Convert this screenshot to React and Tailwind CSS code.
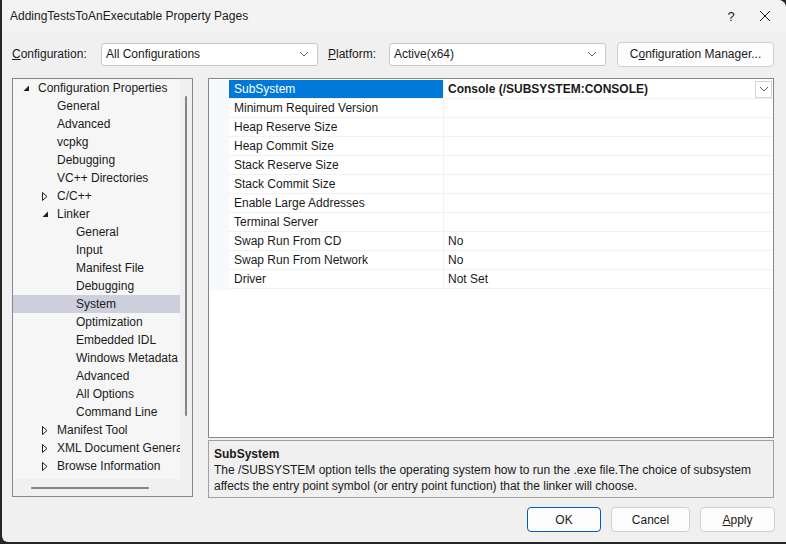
import React from "react";

const treeItems = [
  { label: "Configuration Properties", level: 0, arrow: "open" },
  { label: "General", level: 1 },
  { label: "Advanced", level: 1 },
  { label: "vcpkg", level: 1 },
  { label: "Debugging", level: 1 },
  { label: "VC++ Directories", level: 1 },
  { label: "C/C++", level: 1, arrow: "closed" },
  { label: "Linker", level: 1, arrow: "open" },
  { label: "General", level: 2 },
  { label: "Input", level: 2 },
  { label: "Manifest File", level: 2 },
  { label: "Debugging", level: 2 },
  { label: "System", level: 2, selected: true },
  { label: "Optimization", level: 2 },
  { label: "Embedded IDL", level: 2 },
  { label: "Windows Metadata", level: 2 },
  { label: "Advanced", level: 2 },
  { label: "All Options", level: 2 },
  { label: "Command Line", level: 2 },
  { label: "Manifest Tool", level: 1, arrow: "closed" },
  { label: "XML Document Generator", level: 1, arrow: "closed" },
  { label: "Browse Information", level: 1, arrow: "closed" },
];

const props = [
  ["SubSystem", "Console (/SUBSYSTEM:CONSOLE)"],
  ["Minimum Required Version", ""],
  ["Heap Reserve Size", ""],
  ["Heap Commit Size", ""],
  ["Stack Reserve Size", ""],
  ["Stack Commit Size", ""],
  ["Enable Large Addresses", ""],
  ["Terminal Server", ""],
  ["Swap Run From CD", "No"],
  ["Swap Run From Network", "No"],
  ["Driver", "Not Set"],
];

const indent = ["pl-[10px]", "pl-[29px]", "pl-[48px]"];

function Chevron() {
  return (
    <svg width="10" height="6" viewBox="0 0 10 6" className="shrink-0">
      <path d="M1 1l4 4 4-4" fill="none" stroke="#606060" strokeWidth="1" />
    </svg>
  );
}

function Arrow({ kind }) {
  if (kind === "open") {
    return (
      <svg width="7" height="7" viewBox="0 0 7 7">
        <path d="M6 0.5V6H0.5z" fill="#1e1e1e" />
      </svg>
    );
  }
  if (kind === "closed") {
    return (
      <svg width="6" height="9" viewBox="0 0 6 9">
        <path d="M0.5 0.5L5 4.5 0.5 8.5z" fill="none" stroke="#1e1e1e" strokeWidth="1" />
      </svg>
    );
  }
  return null;
}

function Select({ value, width }) {
  return (
    <div className={`${width} h-[23px] bg-white border border-[#c8c8c8] rounded-[3px] flex items-center justify-between pl-[4px] pr-[8px]`}>
      <span>{value}</span>
      <Chevron />
    </div>
  );
}

function Button({ children, primary, width }) {
  return (
    <div
      className={`${width} h-[25px] rounded-[4px] bg-[#fdfdfd] flex items-center justify-center ${
        primary ? "border border-[#005fb8]" : "border border-[#d0d0d0]"
      }`}
    >
      {children}
    </div>
  );
}

export default function App() {
  return (
    <div className="w-[786px] h-[544px] bg-[#262626] font-['Liberation_Sans',Arial,sans-serif] text-[12px] text-[#1a1a1a] leading-none overflow-hidden">
      <div className="w-[784px] h-[542px] ml-[2px] bg-[#f0f0f0] rounded-tr-[8px] rounded-bl-[6px] overflow-hidden flex flex-col">
        {/* title bar */}
        <div className="h-[32px] bg-[#f3f3f3] flex items-center pl-[8px] shrink-0">
          <span className="flex-1">AddingTestsToAnExecutable Property Pages</span>
          <span className="w-[40px] text-center text-[13px]">?</span>
          <svg width="12" height="12" viewBox="0 0 12 12" className="mr-[15px] ml-[8px]">
            <path d="M1 1l10 10M11 1L1 11" stroke="#1a1a1a" strokeWidth="1" />
          </svg>
        </div>

        {/* configuration row */}
        <div className="flex items-center h-[24px] mt-[10px] pl-[10px] shrink-0">
          <span className="w-[89px]">
            <span className="underline">C</span>onfiguration:
          </span>
          <Select value="All Configurations" width="w-[217px]" />
          <span className="ml-[10px] w-[61px]">
            <span className="underline">P</span>latform:
          </span>
          <Select value="Active(x64)" width="w-[217px]" />
          <div className="ml-[11px]">
            <Button width="w-[157px]">
              C<span className="underline">o</span>nfiguration Manager...
            </Button>
          </div>
        </div>

        {/* main area */}
        <div className="flex mt-[12px] pl-[10px] h-[420px] shrink-0">
          {/* tree */}
          <div className="w-[181px] h-[419px] border border-[#828790] bg-[#f0f0f0] flex flex-col">
            <div className="flex flex-1 min-h-0">
              <div className="flex-1 min-w-0 bg-[#f6f6f6] overflow-hidden">
                {treeItems.map((it, i) => (
                  <div
                    key={i}
                    className={`h-[18px] flex items-center whitespace-nowrap ${indent[it.level]} ${
                      it.selected ? "bg-[#cdd0dc]" : ""
                    }`}
                  >
                    <span className="w-[15px] shrink-0 flex items-center">
                      <Arrow kind={it.arrow} />
                    </span>
                    <span className="shrink-0">{it.label}</span>
                  </div>
                ))}
              </div>
              <div className="w-[12px] shrink-0 flex justify-center pt-[17px] pb-[63px]">
                <div className="w-[2px] h-full bg-[#858585] rounded-full" />
              </div>
            </div>
            <div className="h-[17px] flex items-center pl-[18px] pr-[43px]">
              <div className="h-[2px] w-full bg-[#858585] rounded-full" />
            </div>
          </div>

          {/* right side */}
          <div className="ml-[15px] w-[566px] flex flex-col">
            <div className="h-[360px] border border-[#828790] bg-white flex pt-[1px]">
              <div className="w-[20px] bg-[#f7f9fc] h-[210px]" />
              <div className="flex-1 flex flex-col">
                {props.map(([name, value], i) => (
                  <div key={i} className="h-[19px] flex border-b border-[#f0f2f6]">
                    <div
                      className={`w-[215px] flex items-center pl-[5px] border-r border-[#f0f2f6] ${
                        i === 0 ? "bg-[#0078d7] text-white" : ""
                      }`}
                    >
                      {name}
                    </div>
                    <div className={`flex-1 flex items-center pl-[4px] ${i === 0 ? "font-bold" : ""}`}>
                      <span className="flex-1">{value}</span>
                      {i === 0 && (
                        <div className="w-[17px] h-[17px] mr-[1px] border border-[#d4d4d4] bg-white flex items-center justify-center">
                          <Chevron />
                        </div>
                      )}
                    </div>
                  </div>
                ))}
              </div>
            </div>
            <div className="mt-[2px] h-[58px] border border-[#a0a0a0] bg-[#f0f0f0] px-[5px] pt-[5px] leading-[16px]">
              <div className="font-bold">SubSystem</div>
              <div>
                The /SUBSYSTEM option tells the operating system how to run the .exe file.The choice of subsystem
                affects the entry point symbol (or entry point function) that the linker will choose.
              </div>
            </div>
          </div>
        </div>

        {/* buttons */}
        <div className="flex justify-end gap-[10px] pr-[11px] mt-[9px]">
          <Button primary width="w-[74px]">OK</Button>
          <Button width="w-[79px]">Cancel</Button>
          <Button width="w-[75px]">
            <span className="underline">A</span>pply
          </Button>
        </div>
      </div>
    </div>
  );
}
